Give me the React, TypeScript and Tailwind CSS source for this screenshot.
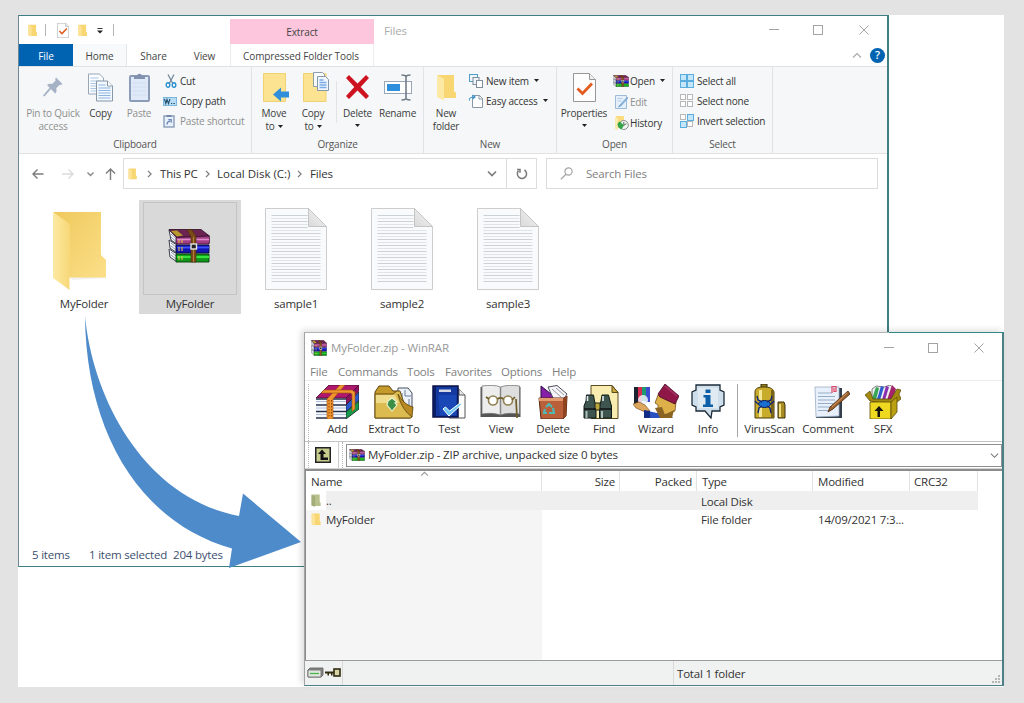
import type { ReactNode } from "react";

/* ---------- shared icons ---------- */

function FolderSmall({ className = "w-[10px] h-[14px]", green = false }: { className?: string; green?: boolean }) {
  return (
    <svg className={className} viewBox="0 0 10 14">
      <path d="M1 0.5h8v8l1 .8v3.7H1z" fill={green ? "#b9c08c" : "#f8d772"} />
      <path d="M0 .5l4 2.200v11L0 12.500z" fill={green ? "#a3ad78" : "#fde39a"} />
    </svg>
  );
}

function RarBooks({ className }: { className: string }) {
  return (
    <svg className={className} viewBox="0 0 42 34" preserveAspectRatio="none">
      <path d="M1 1l8 7v7l-6-4zM1 11l8 5v8l-7-5zM1 20l8 5v8l-7-5z" fill="#f4f6fb" stroke="#3a3f4c" strokeWidth="1" />
      <path d="M3 5l5 4.500M3 8l5 4.500M3 14l5 4M3 17l5 4M3 23l5 4M3 26l5 4" stroke="#7a8294" strokeWidth=".8" />
      <path d="M1 .5h32l8.500 6.500-33 1.500z" fill="#6d2352" stroke="#2c0d22" strokeWidth=".8" />
      <path d="M3 2l6-.5 6 5-6 1z" fill="#b79b2c" />
      <path d="M8 8.500l33-1.500c1 2 1 5 0 8H8z" fill="#a23c84" stroke="#35102c" strokeWidth=".8" />
      <path d="M9 10.500h32" stroke="#e08cc8" strokeWidth="1.600" />
      <path d="M8 16h33v8H8z" fill="#1414b0" stroke="#07073c" strokeWidth=".9" />
      <path d="M9 18.500h32" stroke="#3d50ff" strokeWidth="1.800" />
      <path d="M8 25h33v8H8z" fill="#0f9618" stroke="#063a0a" strokeWidth=".9" />
      <path d="M9 28h32" stroke="#37e23c" strokeWidth="2.200" />
      <path d="M11 11v3M14 11v3M11 18v4M14 18v4M11 27v4M14 27v4" stroke="#e2c34e" strokeWidth="1.100" />
      <path d="M19 .8h5l4 6.500V33h-5V8z" fill="#7a4a18" stroke="#4a2a0a" strokeWidth=".6" />
      <path d="M25.500 8v25" stroke="#b88442" strokeWidth=".9" />
      <rect x="23" y="15" width="5.500" height="5" fill="#222" stroke="#e5e5e5" strokeWidth="1.400" />
    </svg>
  );
}

function Chevron({ dir, className, stroke = "#7b7b7b", sw = 1.4 }: { dir: "up" | "down" | "right"; className: string; stroke?: string; sw?: number }) {
  const d = dir === "up" ? "M1 5.500l4-4 4 4" : dir === "down" ? "M1 1.500l4 4 4-4" : "M1 1l3.500 3.500L1 8";
  return (
    <svg className={className} viewBox={dir === "right" ? "0 0 5.500 9" : "0 0 10 7"} fill="none">
      <path d={d} stroke={stroke} strokeWidth={sw} />
    </svg>
  );
}

function Caret({ className = "" }: { className?: string }) {
  return (
    <svg className={"w-[5px] h-[3px] shrink-0 " + className} viewBox="0 0 5 3">
      <path d="M0 0h5L2.500 3z" fill="#222" />
    </svg>
  );
}

function WindowControls() {
  return (
    <svg className="w-[102px] h-[12px] shrink-0" viewBox="0 0 102 12" fill="none" stroke="#a3a3a3">
      <path d="M0 5.500h10" />
      <rect x="44.500" y="1.500" width="9" height="9" />
      <path d="M90.500 1.500l9 9M99.500 1.500l-9 9" />
    </svg>
  );
}

/* ---------- ribbon icons ---------- */

const PinIcon = () => (
  <svg className="w-[20px] h-[20px]" viewBox="0 0 20 20">
    <path d="M13 .5l6.500 6.500-1.800 1-1-.3-3.500 3.500c.8 2 .3 4-1 5.300L4 8c1.600-1.300 3.400-1.600 5.200-.9l3.400-3.500-.4-1.300z" fill="#a5b1c4" />
    <path d="M7.500 11.200L.7 19" stroke="#a5b1c4" strokeWidth="1.800" />
  </svg>
);

const CopyIcon = () => (
  <svg className="w-[25px] h-[29px]" viewBox="0 0 25 29">
    <path d="M.5 1h11l4 4v16H.500z" fill="#fafcff" stroke="#98a6b6" />
    <path d="M2.500 5h8M2.500 8h10M2.500 10.500h10M2.500 13h6M2.500 15.500h6M2.500 18h6" stroke="#a9c6e4" />
    <path d="M8.500 8h11l5 5v15h-16z" fill="#f3f8fe" stroke="#8797a8" />
    <path d="M19.500 8v5h5" fill="#fff" stroke="#8797a8" />
    <path d="M10.500 12h7M10.500 15h12M10.500 17.500h12M10.500 20h12M10.500 22.500h12M10.500 25h12" stroke="#8db5e3" />
  </svg>
);

const PasteIcon = () => (
  <svg className="w-[21px] h-[29px]" viewBox="0 0 21 29">
    <rect x="1" y="3" width="19" height="25" rx="1" fill="#dfe9f8" stroke="#8b9cb8" strokeWidth="2" />
    <path d="M5 6V3h3c.2-3 4.800-3 5 0h3v3z" fill="#8292ae" />
    <path d="M3.500 10h14M3.500 14h14M3.500 18h14M3.500 22h14" stroke="#d1def0" />
  </svg>
);

const CutIcon = () => (
  <svg className="w-[12px] h-[14px]" viewBox="0 0 12 14" fill="none">
    <path d="M3 .5l5 9.500M9 .5L4 10" stroke="#6f8599" strokeWidth="1.200" />
    <ellipse cx="3" cy="11" rx="1.800" ry="2.200" stroke="#2d91cf" strokeWidth="1.400" />
    <ellipse cx="9" cy="11" rx="1.800" ry="2.200" stroke="#2d91cf" strokeWidth="1.400" />
  </svg>
);

const CopyPathIcon = () => (
  <svg className="w-[14px] h-[9px]" viewBox="0 0 14 9">
    <rect x=".5" y=".5" width="13" height="8" fill="#b7dcf4" stroke="#7cb7df" />
    <path d="M1.500 2l1.300 4.500L4 2.500l1.500 4L7 2" fill="none" stroke="#21506f" strokeWidth="1.100" />
    <path d="M8 6.500h1.200M10.300 6.500h1.500" stroke="#21506f" />
  </svg>
);

const PasteShortcutIcon = () => (
  <svg className="w-[12px] h-[14px]" viewBox="0 0 12 14">
    <rect x="1" y="2" width="10" height="11" fill="#e9f1fb" stroke="#8195b5" strokeWidth="1.300" />
    <path d="M3.500 3V1h5v2z" fill="#7587a6" />
    <path d="M4 10.500c0-2 1-3 3-3.300M5.300 5.700h2.900v3" fill="none" stroke="#6886b5" strokeWidth="1.300" />
  </svg>
);

const MoveToIcon = () => (
  <svg className="w-[26px] h-[29px]" viewBox="0 0 26 29">
    <path d="M.5 .500h22v28h-22z" fill="#fbe391" stroke="#f0d273" />
    <path d="M10 21.500l8-7v4h8v6h-8v4z" fill="#2f8fdb" />
  </svg>
);

const CopyToIcon = () => (
  <svg className="w-[26px] h-[30px]" viewBox="0 0 26 30">
    <path d="M.5 1.500h22.500v28h-22.500z" fill="#fbe391" stroke="#f0d273" />
    <path d="M10.500.5h9l2 2v12h-11z" fill="#f7faff" stroke="#8f9cab" />
    <path d="M14.500 4.500h8l3 3v11h-11z" fill="#f0f6ff" stroke="#8796a9" />
    <path d="M16.500 8h4M16.500 10.500h7M16.500 13h7M16.500 15.500h7" stroke="#7aaae6" strokeWidth="1.400" />
  </svg>
);

const DeleteIcon = () => (
  <svg className="w-[25px] h-[26px]" viewBox="0 0 25 26">
    <path d="M1 4l3-3 8.500 8.500L21 1l3 3-8.300 9L24 22l-3 3-8.500-8.500L4 25l-3-3 8.300-9z" fill="#cd1320" />
  </svg>
);

const RenameIcon = () => (
  <svg className="w-[28px] h-[27px]" viewBox="0 0 28 27">
    <rect x=".5" y="7.500" width="27" height="12" fill="#fff" stroke="#98a6b5" />
    <rect x="3" y="10" width="13" height="7" fill="#2d8fdc" />
    <path d="M17.500 1c3 0 4 .5 4.500 1.500.5-1 1.500-1.500 4.500-1.500M22 2v22M17.500 26c3 0 4-.5 4.500-1.500.5 1 1.500 1.500 4.500 1.500" fill="none" stroke="#6a7681" strokeWidth="1.500" />
  </svg>
);

const NewFolderIcon = () => (
  <svg className="w-[19px] h-[27px]" viewBox="0 0 19 27">
    <path d="M1 1h16v16l2 2v5H1z" fill="#f8d672" />
    <path d="M0 1l7 4v21.500L0 23z" fill="#fde9a6" />
  </svg>
);

const NewItemIcon = () => (
  <svg className="w-[14px] h-[14px]" viewBox="0 0 14 14" fill="#eef5fb" stroke="#7f8c99">
    <rect x=".5" y=".5" width="8" height="7" stroke="#4d9dc8" />
    <rect x="4" y="3.500" width="6" height="7" />
    <rect x="7.500" y="6.500" width="6" height="7" fill="#fff" />
  </svg>
);

const EasyAccessIcon = () => (
  <svg className="w-[14px] h-[14px]" viewBox="0 0 14 14" fill="none">
    <path d="M3.500 1.500h7l3 3v9h-10z" fill="#fff" stroke="#8b98a5" />
    <path d="M10 1v4h4" stroke="#8b98a5" />
    <path d="M0 7c0-3 1.500-4 5-4M3.500 1l2.500 2-2.500 2" stroke="#3f97cf" strokeWidth="1.200" />
  </svg>
);

const PropertiesIcon = ({ className }: { className: string }) => (
  <svg className={className} viewBox="0 0 23 29">
    <path d="M.5.500h16l6 6v22H.500z" fill="#fdfdfd" stroke="#979797" />
    <path d="M16.500.500v6h6" fill="#eee" stroke="#979797" />
    <path d="M4.500 15.500l5 5L19 10.500" fill="none" stroke="#e35b1e" strokeWidth="2.800" />
  </svg>
);

const EditIcon = () => (
  <svg className="w-[13px] h-[14px]" viewBox="0 0 13 14">
    <path d="M.5.500h11v13H.500z" fill="#e5f0fa" stroke="#9bbbd6" />
    <path d="M2.500 3.500h5M2.500 6h4" stroke="#b7cfe4" />
    <path d="M12.500 2L5 10l-1.500 2 2.200-1L13 3" fill="#8db9de" stroke="#78a9d2" />
  </svg>
);

const HistoryIcon = () => (
  <svg className="w-[14px] h-[14px]" viewBox="0 0 14 14">
    <path d="M1 0h8v12H1z" fill="#fbdd80" />
    <path d="M0 1l3 1.500V14l-3-1z" fill="#fdeaad" />
    <circle cx="8.800" cy="9" r="4.500" fill="#f1f5f1" stroke="#858f89" />
    <path d="M8.800 6v3.300l2.600-1.600" stroke="#5b645e" fill="none" />
    <path d="M2.500 8.500c0 2.500 2 4.500 4 4.800L9 9.500 5 5.500C3.500 6 2.500 7 2.500 8.500z" fill="#35a54b" />
  </svg>
);

function SelectIcon({ kind }: { kind: "all" | "none" | "invert" }) {
  const cells: [number, number, boolean][] = [
    [0, 0, kind === "all"],
    [7, 0, kind !== "none"],
    [0, 7, kind !== "none"],
    [7, 7, kind === "all"],
  ];
  return (
    <svg className="w-[14px] h-[14px]" viewBox="0 0 14 14">
      {cells.map(([x, y, on]) => (
        <rect
          key={x + "-" + y}
          x={x + 0.5}
          y={y + 0.5}
          width={on ? 6 : 5}
          height={on ? 6 : 5}
          fill={on ? "#c3e6fb" : "#fff"}
          stroke={on ? "#5badde" : "#b8b8b8"}
        />
      ))}
    </svg>
  );
}

/* ---------- ribbon building blocks ---------- */

function BigButton({ icon, lines, className, muted = false, caret }: { icon: ReactNode; lines: string[]; className: string; muted?: boolean; caret?: "inline" | "below" }) {
  return (
    <div className={"flex shrink-0 flex-col items-center leading-[13px] " + (muted ? "text-[#8f8f8f] " : "text-[#3c3c3c] ") + className}>
      <div className="flex h-[36px] items-center justify-center pb-[4px]">{icon}</div>
      {lines.map((l, i) => (
        <div key={l} className="flex items-center gap-[3px] whitespace-nowrap">
          {l}
          {caret === "inline" && i === lines.length - 1 && <Caret />}
        </div>
      ))}
      {caret === "below" && <Caret className="mt-[4px]" />}
    </div>
  );
}

function SmallButton({ icon, label, muted = false, caret = false }: { icon: ReactNode; label: string; muted?: boolean; caret?: boolean }) {
  return (
    <div className="flex h-[20px] items-center">
      <div className="flex w-[17px] items-center">{icon}</div>
      <span className={"whitespace-nowrap " + (muted ? "text-[#8f8f8f]" : "text-[#333]")}>{label}</span>
      {caret && <Caret className="ml-[5px] mb-[2px]" />}
    </div>
  );
}

function Group({ label, className, children }: { label: string; className: string; children: ReactNode }) {
  return (
    <div className={"flex shrink-0 flex-col border-r border-[#e2e3e4] " + className}>
      <div className="flex h-[70px] pt-[4px]">{children}</div>
      <div className="pt-px text-center leading-[17px] text-[#555]">{label}</div>
    </div>
  );
}

function Ribbon() {
  return (
    <div className="flex h-[88px] border-y border-[#dfe1e3] bg-[#f5f7f8] text-[10px] tracking-[-0.2px]">
      <Group label="Clipboard" className="w-[233px]">
        <BigButton className="ml-[4px] w-[60px]" muted icon={<PinIcon />} lines={["Pin to Quick", "access"]} />
        <BigButton className="w-[35px]" icon={<CopyIcon />} lines={["Copy"]} />
        <BigButton className="w-[42px]" muted icon={<PasteIcon />} lines={["Paste"]} />
        <div className="ml-[3px]">
          <SmallButton icon={<span className="pl-[2px]"><CutIcon /></span>} label="Cut" />
          <SmallButton icon={<CopyPathIcon />} label="Copy path" />
          <SmallButton icon={<PasteShortcutIcon />} label="Paste shortcut" muted />
        </div>
      </Group>
      <Group label="Organize" className="w-[172px]">
        <BigButton className="ml-[2px] w-[40px]" icon={<span className="pl-[3px]"><MoveToIcon /></span>} lines={["Move", "to"]} caret="inline" />
        <BigButton className="w-[38px]" icon={<span className="pl-[5px]"><CopyToIcon /></span>} lines={["Copy", "to"]} caret="inline" />
        <div className="ml-[4px] mt-[10px] h-[42px] w-px bg-[#e2e3e4]" />
        <BigButton className="w-[41px]" icon={<DeleteIcon />} lines={["Delete"]} caret="below" />
        <BigButton className="w-[39px]" icon={<RenameIcon />} lines={["Rename"]} />
      </Group>
      <Group label="New" className="w-[133px]">
        <BigButton className="w-[44px]" icon={<NewFolderIcon />} lines={["New", "folder"]} />
        <div className="ml-px">
          <SmallButton icon={<NewItemIcon />} label="New item" caret />
          <SmallButton icon={<EasyAccessIcon />} label="Easy access" caret />
        </div>
      </Group>
      <Group label="Open" className="w-[116px]">
        <BigButton className="w-[54px]" icon={<PropertiesIcon className="h-[29px] w-[23px]" />} lines={["Properties"]} caret="below" />
        <div className="ml-[2px] flex flex-col gap-px">
          <SmallButton icon={<RarBooks className="h-[12px] w-[16px]" />} label="Open" caret />
          <SmallButton icon={<span className="pl-[2px]"><EditIcon /></span>} label="Edit" muted />
          <SmallButton icon={<span className="pl-[2px]"><HistoryIcon /></span>} label="History" />
        </div>
      </Group>
      <Group label="Select" className="w-[100px]">
        <div className="ml-[7px]">
          <SmallButton icon={<SelectIcon kind="all" />} label="Select all" />
          <SmallButton icon={<SelectIcon kind="none" />} label="Select none" />
          <SmallButton icon={<SelectIcon kind="invert" />} label="Invert selection" />
        </div>
      </Group>
    </div>
  );
}

/* ---------- explorer window ---------- */

function TitleAndTabs() {
  return (
    <div className="h-[50px] text-[10px] tracking-[-0.1px] text-[#444]">
      <div className="flex h-[28px]">
        <div className="flex w-[211px] items-center pl-[9px]">
          <FolderSmall className="h-[13px] w-[9px]" />
          <div className="ml-[8px] h-[12px] w-px bg-[#b5b5b5]" />
          <PropertiesIcon className="ml-[11px] h-[15px] w-[12px]" />
          <FolderSmall className="ml-[9px] h-[13px] w-[9px]" />
          <svg className="ml-[9px] mt-[2px] h-[6px] w-[8px]" viewBox="0 0 8 6">
            <path d="M1.500.500h5" stroke="#333" />
            <path d="M1 2.500h6L4 5.500z" fill="#222" />
          </svg>
          <div className="ml-[9px] h-[12px] w-px bg-[#b5b5b5]" />
        </div>
        <div className="mt-[3px] flex w-[144px] items-center justify-center bg-[#fdc6dd] pt-[2px]">Extract</div>
        <div className="flex flex-1 items-center pl-[10px] pt-px text-[11.5px] tracking-[-0.2px] text-[#aaa]">Files</div>
        <div className="flex items-center pr-[16px]">
          <WindowControls />
        </div>
      </div>
      <div className="flex h-[22px] items-stretch">
        <div className="flex w-[54px] items-center justify-center bg-[#0063b1] pt-[2px] text-white">File</div>
        <div className="flex w-[54px] items-center justify-center border-r border-[#e4e6e8] bg-[#f7f9fa] pt-[2px]">Home</div>
        <div className="flex w-[53px] items-center justify-center pt-[2px]">Share</div>
        <div className="flex w-[49px] items-center justify-center pt-[2px]">View</div>
        <div className="ml-px flex w-[144px] items-center justify-center border-x border-[#ececec] pr-[2px] pt-[2px]">Compressed Folder Tools</div>
        <div className="flex flex-1 items-center justify-end gap-[8px] pr-[2px]">
          <Chevron dir="up" className="h-[7px] w-[10px]" stroke="#aaa" sw={1.2} />
          <div className="flex h-[15px] w-[15px] items-center justify-center rounded-full bg-[#0063b1] text-[11px] font-semibold text-white">?</div>
        </div>
      </div>
    </div>
  );
}

function AddressRow() {
  return (
    <div className="mt-[4px] flex h-[31px] items-stretch pl-[13px] text-[11.5px] tracking-[-0.2px] text-[#333]">
      <div className="flex w-[91px] items-center">
        <svg className="h-[14px] w-[84px]" viewBox="0 0 84 14" fill="none" strokeWidth="1.400">
          <path d="M11.500 7H1M5.500 2.500L1 7l4.500 4.500" stroke="#7c7c7c" />
          <path d="M30 7h11M36.500 2.500L41 7l-4.500 4.500" stroke="#dadada" />
          <path d="M55.500 5.500l3 3 3-3" stroke="#888" />
          <path d="M78.500 13V2M74 6.500L78.500 2l4.500 4.500" stroke="#7c7c7c" />
        </svg>
      </div>
      <div className="flex w-[384px] items-center border border-[#dcdcdc] pl-[4px]">
        <FolderSmall className="h-[12px] w-[9px]" />
        <Chevron dir="right" className="ml-[10px] h-[8px] w-[5px]" />
        <span className="ml-[8px] w-[37px] whitespace-nowrap pt-px">This PC</span>
        <Chevron dir="right" className="ml-[8px] h-[8px] w-[5px]" />
        <span className="ml-[7px] w-[74px] whitespace-nowrap pt-px tracking-[0px]">Local Disk (C:)</span>
        <Chevron dir="right" className="ml-[6px] h-[8px] w-[5px]" />
        <span className="ml-[8px] pt-px">Files</span>
        <Chevron dir="down" className="ml-auto mr-[9px] h-[7px] w-[10px]" sw={1.6} />
      </div>
      <div className="-ml-px flex w-[31px] items-center justify-center border border-[#dcdcdc]">
        <svg className="h-[12px] w-[12px]" viewBox="0 0 12 12" fill="none" stroke="#7a7a7a" strokeWidth="1.500">
          <path d="M8.500 2a4.600 4.600 0 1 1-6 .8M1 1.500h3v3.200" />
        </svg>
      </div>
      <div className="ml-[9px] flex w-[332px] items-center border border-[#dcdcdc] pl-[13px] text-[#808080]">
        <svg className="h-[13px] w-[13px]" viewBox="0 0 13 13" fill="none" stroke="#a5a5a5" strokeWidth="1.200">
          <circle cx="8.500" cy="4.500" r="3.600" />
          <path d="M6 7.200L.8 12.200" />
        </svg>
        <span className="ml-[13px] pt-px">Search Files</span>
      </div>
    </div>
  );
}

const BigFolder = () => (
  <svg className="h-[80px] w-[54px]" viewBox="0 0 54 80">
    <defs>
      <linearGradient id="fb" x1="0" y1="0" x2="1" y2="1">
        <stop offset="0" stopColor="#efc95d" />
        <stop offset="1" stopColor="#fbdf88" />
      </linearGradient>
      <linearGradient id="ff" x1="0" y1="0" x2="1" y2="0">
        <stop offset="0" stopColor="#fde9a2" />
        <stop offset="1" stopColor="#f7d878" />
      </linearGradient>
    </defs>
    <path d="M17 66h35l2 1-35 2z" fill="#f0f0f0" />
    <path d="M.5 1h47.500v43l5 5v17.500H14z" fill="url(#fb)" />
    <path d="M0 1l14.500 10.500c2 1.500 2.500 2.500 2.500 4.500v42l-.5 3v18L0 67z" fill="url(#ff)" />
  </svg>
);

const TextFile = () => (
  <svg className="h-[82px] w-[62px]" viewBox="0 0 62 82">
    <defs>
      <linearGradient id="fold" x1="0" y1="1" x2="1" y2="0">
        <stop offset="0" stopColor="#d9d9d9" />
        <stop offset="1" stopColor="#f6f6f6" />
      </linearGradient>
    </defs>
    <path d="M.5.500h43l18 18v63H.500z" fill="#f8fafb" stroke="#cdcdcd" />
    {Array.from({ length: 23 }, (_, i) => (
      <path key={i} d={`M6.500 ${7.5 + i * 3}h${i < 5 ? 36 : 49}`} stroke={i % 2 ? "#dfe4e6" : "#cbd1d5"} />
    ))}
    <path d="M43.500.500v18h18z" fill="url(#fold)" stroke="#c4c4c4" />
  </svg>
);

function FileItem({ name, children, selected = false }: { name: string; children: ReactNode; selected?: boolean }) {
  return (
    <div className={"flex h-[114px] w-[102px] shrink-0 flex-col items-center pt-[2px] " + (selected ? "bg-[#d9d9d9]" : "")}>
      <div className={"flex h-[93px] w-[94px] items-center justify-center border " + (selected ? "border-[#c4c4c4]" : "border-transparent")}>{children}</div>
      <div className="leading-[17px]">{name}</div>
    </div>
  );
}

function Explorer() {
  return (
    <div className="absolute left-[18px] top-[15px] flex h-[552px] w-[871px] flex-col border border-r-2 border-[#3e7f83] border-l-[#6d8796] bg-white">
      <TitleAndTabs />
      <Ribbon />
      <AddressRow />
      <div className="mt-[11px] flex flex-1 gap-[4px] pl-[14px] text-[11.5px] tracking-[-0.2px] text-[#333]">
        <FileItem name="MyFolder"><div className="pr-[9px] pt-[5px]"><BigFolder /></div></FileItem>
        <FileItem name="MyFolder" selected><div className="pb-[6px] pr-[2px]"><RarBooks className="h-[34px] w-[42px]" /></div></FileItem>
        <FileItem name="sample1"><TextFile /></FileItem>
        <FileItem name="sample2"><TextFile /></FileItem>
        <FileItem name="sample3"><div><TextFile /></div></FileItem>
      </div>
      <div className="flex h-[23px] items-center pl-[13px] pt-px text-[11.5px] tracking-[-0.2px] text-[#3d4f6e]">
        <span className="w-[57px]">5 items</span>
        <span className="w-[84px] whitespace-nowrap">1 item selected</span>
        <span>204 bytes</span>
      </div>
    </div>
  );
}

/* ---------- WinRAR toolbar icons ---------- */

const AddIcon = () => (
  <svg className="h-[34px] w-[43px]" viewBox="0 0 43 34">
    <path d="M0 13L13 0h30L30 13z" fill="#b01870" stroke="#3b0a2a" strokeWidth=".8" />
    <path d="M30 13L43 0v6L30 20z" fill="#8c1260" stroke="#3b0a2a" strokeWidth=".6" />
    <path d="M30 20L43 7v8L30 27z" fill="#2b58d0" stroke="#122" strokeWidth=".8" />
    <path d="M30 27l13-11v8L30 34z" fill="#169a4d" stroke="#122" strokeWidth=".8" />
    <path d="M0 13.500h30V34H0z" fill="#f5f8fd" />
    <path d="M0 14h30M0 20h30M0 26.500h30M0 33h30" stroke="#28304c" strokeWidth="1.600" />
    <path d="M0 16.500h30M0 23h30M0 29.500h30" stroke="#9cb0d0" strokeWidth=".8" />
    <path d="M11 14L24 0h5L17 14v20h-6z" fill="#f0962e" stroke="#9c4e0c" strokeWidth=".6" />
    <path d="M8 5h28l3 2v17l-3 2.500V9l-2-1H5z" fill="#f0962e" stroke="#9c4e0c" strokeWidth=".6" />
    <path d="M13 15v18M15.500 15v18" stroke="#8f4708" strokeDasharray="1.500 1.500" />
  </svg>
);

const ExtractIcon = () => (
  <svg className="h-[34px] w-[40px]" viewBox="0 0 40 34">
    <path d="M1 7l4-6h10l4 5h17v27H1z" fill="#c49a2b" stroke="#5b430e" />
    <path d="M24 3h10l4 5v18H24z" fill="#eef2fb" stroke="#454c5c" />
    <path d="M31 5v6h6M28 8v10M35 14v8" stroke="#6b7b9b" fill="none" />
    <path d="M1 9h18l4-3h3c3 10 6 17 12 25l-1 2H1z" fill="#dcbb50" stroke="#6b5013" />
    <path d="M2 10h19l4 8H2z" fill="#f5e7a0" opacity=".75" />
    <path d="M24 9c2 9 6 17 14 23L39 22C32 20 27 15 24 9z" fill="#b98a22" stroke="#5b430e" strokeWidth=".8" />
    <path d="M18 13l5 4-2 1 2 2-5 6-5-6 1-4z" fill="#3c8f46" stroke="#eef3cf" strokeWidth="1.100" />
  </svg>
);

const TestIcon = () => (
  <svg className="h-[34px] w-[34px]" viewBox="0 0 34 34">
    <path d="M17 4h10l6 6v23H17z" fill="#fff" stroke="#555" />
    <path d="M27 4v6h6" fill="#e8e8e8" stroke="#555" />
    <path d="M1 1h25v31H1z" fill="#14399f" stroke="#070f45" strokeWidth="1.500" />
    <path d="M2 2h2v29H2z" fill="#0a1e68" />
    <path d="M6 10h18v20H8z" fill="#1e55c9" opacity=".55" />
    <rect x="7" y="4.500" width="12" height="2.500" fill="#d5dae6" />
    <path d="M11 24l6 7 13-12-2-1-10.500 8-4-4z" fill="#72c8f5" stroke="#fff" strokeWidth="1" />
  </svg>
);

const ViewIcon = () => (
  <svg className="h-[34px] w-[42px]" viewBox="0 0 42 34">
    <path d="M.5 2h40v30H.500z" fill="#555" />
    <path d="M2 1c7-1 14-1 18.500 1v28C15 28 8 28 2 29z" fill="#ededed" stroke="#777" strokeWidth=".8" />
    <path d="M39.500 1c-7-1-14-1-19 1v28c5-2 12-2 19-1z" fill="#dedede" stroke="#777" strokeWidth=".8" />
    <path d="M20.500 2v28" stroke="#888" strokeWidth="1.500" />
    <circle cx="13" cy="15.500" r="4.500" fill="#fff" stroke="#908052" strokeWidth="1.600" />
    <circle cx="28" cy="15.500" r="4.500" fill="#fff" stroke="#908052" strokeWidth="1.600" />
    <path d="M6 12l3 2M17.500 14c2-1.500 4-1.500 6 0M32 15l3-3M36 14l1 19" stroke="#6f5e28" strokeWidth="1.700" fill="none" />
  </svg>
);

const TrashIcon = () => (
  <svg className="h-[34px] w-[31px]" viewBox="0 0 31 34">
    <path d="M3 14L3 1l15 12z" fill="#8620a8" stroke="#2c0c45" />
    <path d="M10 2l9-1.500L29 9l-4 6h-9z" fill="#f5f5fa" stroke="#4c4c5b" />
    <path d="M14 4l9 8M18 3l8 7" stroke="#999" />
    <path d="M1 13h26l2-2-1 20-3 3H3z" fill="#b9603a" stroke="#572612" />
    <path d="M1 13h24v3H1z" fill="#e29a6e" />
    <path d="M25 14l4-3-1 20-3 3z" fill="#92431f" />
    <path d="M8 22l3-3 3 3M15 23l1 5h-5M9 28H6l1-4" fill="none" stroke="#4fb9b6" strokeWidth="2.200" />
  </svg>
);

const FindIcon = () => (
  <svg className="h-[34px] w-[37px]" viewBox="0 0 37 34">
    <path d="M8 .5h21l6 7v26H8z" fill="#f8ecb0" stroke="#5b4a1c" />
    <path d="M29 .500v7h6z" fill="#c9a63c" stroke="#5b4a1c" />
    <path d="M3.500 10h7l1 6 1.500 5v12H1V21l2-5zM19 10h6.500l1.500 6 1.500 5v12h-12V21l1.500-5z" fill="#3d554e" stroke="#0e1a16" />
    <path d="M12 18h5v7h-5z" fill="#b9a638" stroke="#222" />
    <path d="M4.500 11v5M20 11v5" stroke="#e5edf0" strokeWidth="1.600" />
    <path d="M1 24h12M16.500 24h12" stroke="#111" strokeWidth="1.500" />
    <path d="M3.500 26v7M19 26v7" stroke="#aebdb8" strokeWidth="2" />
  </svg>
);

const WizardIcon = () => (
  <svg className="h-[35px] w-[46px]" viewBox="0 0 46 35">
    <path d="M1 3h5v17H1z" fill="#1b2230" />
    <path d="M5 3h4v16H5z" fill="#d52c50" />
    <path d="M9 3h4v14H9z" fill="#1d9b6e" />
    <path d="M13 3h4v15h-4z" fill="#3e4bd0" />
    <circle cx="10" cy="16" r="5" fill="#eaf2fb" opacity=".85" />
    <path d="M0 20l6-2 6 3 5 6-5 1-9-4z" fill="#dda75d" stroke="#754718" strokeWidth=".6" />
    <path d="M11 34l4-7 9 2 12 1 4 4z" fill="#2850c0" />
    <path d="M11 26l6 1v7h-6z" fill="#122c86" />
    <path d="M25 11l-3 8 3 2v6l6 4 11-4 1-9z" fill="#deb049" stroke="#67440d" strokeWidth=".7" />
    <path d="M22 24l7-1 3 8 9-5-2 8H27z" fill="#8a6322" />
    <path d="M25 10L32 0l14 12-4 8-15-7z" fill="#8e1748" stroke="#43071f" strokeWidth=".8" />
    <path d="M32 2l12 10" stroke="#a83264" strokeWidth="1.500" />
  </svg>
);

const InfoIcon = () => (
  <svg className="h-[35px] w-[34px]" viewBox="0 0 34 35">
    <path d="M5 1h24v5l4 2v13l-4 2v4h-8l-1 7-6-7H5v-4l-4-2V8l4-2z" fill="#cfdeeb" stroke="#1d2b38" strokeWidth="1.300" />
    <path d="M7 4h20v20H7z" fill="#e6eff7" opacity=".7" />
    <rect x="14.500" y="5.500" width="5" height="3.500" fill="#0d5fa8" />
    <path d="M12.500 11h7v9.500H22v2.500H12v-2.500h2.500v-7h-2z" fill="#0d5fa8" />
  </svg>
);

const VirusIcon = () => (
  <svg className="h-[35px] w-[32px]" viewBox="0 0 32 35">
    <path d="M7 0h6v4H7z" fill="#8f7922" stroke="#352c09" />
    <path d="M1 8c0-4 4-5 9-5s9 1 10 5v26H1z" fill="#c9ab2b" stroke="#4a3c0a" />
    <path d="M5 6h3v27H5z" fill="#f4e79a" />
    <path d="M17 6h3v28h-3z" fill="#7a6415" />
    <path d="M24 18h6l1 3v13h-7z" fill="#a98c21" stroke="#3b300a" />
    <path d="M26 20v13" stroke="#eedc80" strokeWidth="2" />
    <ellipse cx="10.500" cy="20" rx="6" ry="3.500" fill="#1b6fd0" stroke="#0b1a54" />
    <path d="M3 12l1 4 4 2M18 12l-1 4-4 2M1 17l3 3M20 17l-3 3M4 29l1-5 3-2M17 29l-1-5-3-2" stroke="#10277a" strokeWidth="1.400" fill="none" />
  </svg>
);

const CommentIcon = () => (
  <svg className="h-[34px] w-[36px]" viewBox="0 0 36 34">
    <path d="M3 3h25v30H2z" fill="#333f4d" />
    <path d="M1 2h24v29L2 32z" fill="#e8f1fb" stroke="#9cadc0" strokeWidth=".8" />
    <path d="M4 8h14M4 11.500h17M4 15h17M4 18.500h15M4 22h13M4 25.500h10" stroke="#95acc8" />
    <path d="M18 8V1.500h4V6.500h-2V3" fill="none" stroke="#e14562" strokeWidth="1.200" />
    <path d="M34 6l2 3-17 15-5 3 2-5z" fill="#9c6330" stroke="#482509" strokeWidth=".8" />
    <path d="M18 22L33 8" stroke="#d49b5e" />
  </svg>
);

const SfxIcon = () => (
  <svg className="h-[34px] w-[36px]" viewBox="0 0 36 34">
    <path d="M7 4l4-3 8 1 6-2 5 4-3 12H7z" fill="#eee" stroke="#333" strokeWidth=".6" />
    <path d="M7 14L11 2l3 1-3 12z" fill="#36a558" />
    <path d="M12 14l4-13 3 1-4 13z" fill="#2c5ed0" />
    <path d="M17 15l4-14 3 1-4 13z" fill="#8a2db0" />
    <path d="M22 15L27 0l4 4-4 11z" fill="#a3246a" />
    <path d="M5 16L0 10l5-4 3 8h18l6-10 4 1-2 4 2 5-8 6z" fill="#a38b12" stroke="#514306" strokeWidth=".7" />
    <path d="M5 17h21v17H5z" fill="#eed820" stroke="#5a4d07" strokeWidth=".8" />
    <path d="M26 17l6-5v15l-6 7z" fill="#bba012" stroke="#5a4d07" strokeWidth=".8" />
    <path d="M12.500 32v-6H9.500l4.500-5 4.500 5H15v6z" fill="#15120a" />
  </svg>
);

/* ---------- WinRAR window ---------- */

function Tool({ icon, label, className }: { icon: ReactNode; label: string; className: string }) {
  return (
    <div className={"flex shrink-0 flex-col items-center whitespace-nowrap " + className}>
      <div className="flex h-[36px] items-center pb-px">{icon}</div>
      <div className="leading-[17px]">{label}</div>
    </div>
  );
}

const Grip = () => <div className="w-0 self-stretch border-l border-dotted border-[#b3b3b3]" />;

function FileList() {
  const cell = "flex items-center border-r border-[#e2e2e2] pt-[2px]";
  return (
    <div className="flex h-[191px] flex-col border-l border-t-2 border-[#8c8c8c] bg-white">
      <div className="relative flex h-[20px] shrink-0">
        <div className={cell + " w-[236px] pl-[5px]"}>Name</div>
        <div className={cell + " w-[78px] justify-end pr-[4px]"}>Size</div>
        <div className={cell + " w-[77px] justify-end pr-[4px]"}>Packed</div>
        <div className={cell + " w-[116px] pl-[5px]"}>Type</div>
        <div className={cell + " w-[97px] pl-[5px]"}>Modified</div>
        <div className={cell + " w-[68px] pl-[4px]"}>CRC32</div>
        <Chevron dir="up" className="absolute left-[114px] top-0 h-[6px] w-[9px]" stroke="#999" sw={1.2} />
      </div>
      <div className="flex flex-1">
        <div className="w-[236px] bg-[#f5f5f5]">
          <div className="flex h-[19px]">
            <div className="flex w-[20px] items-center bg-white pl-[5px]"><FolderSmall green className="h-[13px] w-[10px]" /></div>
            <div className="flex-1 bg-[#efefef] pt-px">..</div>
          </div>
          <div className="flex h-[19px] items-center pl-[5px]">
            <FolderSmall className="h-[13px] w-[10px]" />
            <span className="ml-[5px] pt-px">MyFolder</span>
          </div>
        </div>
        <div className="w-[436px]">
          <div className="flex h-[19px] items-center bg-[#efefef] pl-[159px] pt-[2px]">Local Disk</div>
          <div className="flex h-[19px] items-center pl-[159px] pt-px">
            <span className="w-[117px]">File folder</span>
            <span className="whitespace-nowrap">14/09/2021 7:3...</span>
          </div>
        </div>
      </div>
    </div>
  );
}

function WinRar() {
  return (
    <div className="absolute left-[304px] top-[332px] flex h-[354px] w-[700px] flex-col border border-r-2 border-[#4c8087] border-l-[#a3a3a3] border-t-[#b3b3b3] bg-white text-[11.5px] tracking-[-0.2px] text-[#333] shadow-[-3px_-2px_6px_rgba(0,0,0,0.13)]">
      <div className="absolute -right-[2px] -top-px h-px w-[115px] bg-[#2f8883]" />
      <div className="flex h-[29px] shrink-0 items-center pl-[6px] pr-[16px] text-[#999]">
        <RarBooks className="h-[16px] w-[16px]" />
        <span className="ml-[4px] flex-1 pt-px tracking-[-0.1px]">MyFolder.zip - WinRAR</span>
        <WindowControls />
      </div>
      <div className="flex h-[19px] shrink-0 items-center border-b border-[#ececec] pl-[5px] pt-[2px] text-[#808080]">
        <span className="w-[28px]">File</span>
        <span className="w-[69px]">Commands</span>
        <span className="w-[38px]">Tools</span>
        <span className="w-[56px]">Favorites</span>
        <span className="w-[51px]">Options</span>
        <span>Help</span>
      </div>
      <div className="flex h-[61px] shrink-0 border-b border-[#c4c4c4] pl-[3px] pt-[3px]">
        <Grip />
        <Tool className="w-[57px]" icon={<AddIcon />} label="Add" />
        <Tool className="w-[56px]" icon={<ExtractIcon />} label="Extract To" />
        <Tool className="w-[54px]" icon={<TestIcon />} label="Test" />
        <Tool className="w-[50px]" icon={<ViewIcon />} label="View" />
        <Tool className="w-[54px]" icon={<TrashIcon />} label="Delete" />
        <Tool className="w-[48px]" icon={<span className="pr-[6px]"><FindIcon /></span>} label="Find" />
        <Tool className="w-[56px]" icon={<WizardIcon />} label="Wizard" />
        <Tool className="w-[48px]" icon={<InfoIcon />} label="Info" />
        <div className="mb-[4px] ml-[5px] w-px bg-[#a5a5a5]" />
        <Tool className="w-[63px]" icon={<VirusIcon />} label="VirusScan" />
        <Tool className="w-[54px]" icon={<span className="pl-[8px]"><CommentIcon /></span>} label="Comment" />
        <Tool className="w-[56px]" icon={<SfxIcon />} label="SFX" />
      </div>
      <div className="flex h-[26px] shrink-0 items-center pl-[3px]">
        <Grip />
        <svg className="ml-[6px] h-[16px] w-[16px]" viewBox="0 0 16 16">
          <rect x=".75" y=".75" width="14.500" height="14.500" fill="#c6cc8c" stroke="#222" strokeWidth="1.500" />
          <path d="M3 7l4-4.500L11 7H8.500v3.500H13V13H5.500V7z" fill="#111" />
        </svg>
        <div className="ml-[7px] flex gap-[3px] self-stretch">
          <div className="w-px bg-[#ccc]" />
          <Grip />
        </div>
        <div className="ml-[3px] flex h-[23px] flex-1 items-center border border-[#8f8f8f] pl-[2px] pr-[2px]">
          <RarBooks className="h-[12px] w-[16px]" />
          <span className="ml-[3px] flex-1">MyFolder.zip - ZIP archive, unpacked size 0 bytes</span>
          <Chevron dir="down" className="h-[7px] w-[9px]" stroke="#777" sw={1.2} />
        </div>
      </div>
      <div className="h-px shrink-0 bg-[#d5d5d5]" />
      <FileList />
      <div className="flex flex-1 border-t border-[#9b9b9b] bg-[#f0f1f1]">
        <div className="flex w-[38px] items-center border-r border-[#dadada] pl-[2px]">
          <svg className="h-[12px] w-[34px]" viewBox="0 0 34 12">
            <path d="M1 3l2-2h13v7l-2 2H1z" fill="#8d8d8d" stroke="#555" strokeWidth=".8" />
            <path d="M1 3h13v7H1z" fill="#e2e4e0" stroke="#666" strokeWidth=".8" />
            <path d="M3 6.500h9" stroke="#45b84a" strokeWidth="1.300" />
            <path d="M18 4.500h9v2h-1.500v2H24v-2h-2v2h-1.500v-2H18z" fill="#2e2a10" />
            <rect x="27" y="2" width="6" height="7" fill="#d9d4a6" stroke="#2e2a10" strokeWidth="1.600" />
          </svg>
        </div>
        <div className="w-[331px] border-r border-[#dadada]" />
        <div className="flex flex-1 items-center pl-[3px] pt-[2px]">Total 1 folder</div>
        <svg className="mr-px mb-px h-[9px] w-[9px] self-end" viewBox="0 0 9 9" fill="#b5b5b5">
          <path d="M6 0h2v2H6zM3 3h2v2H3zM6 3h2v2H6zM0 6h2v2H0zM3 6h2v2H3zM6 6h2v2H6z" />
        </svg>
      </div>
    </div>
  );
}

export default function App() {
  return (
    <div className="h-[703px] w-[1024px] overflow-hidden bg-[#e3e3e3] pl-[18px] pt-[15px] font-['Open_Sans','Noto_Sans',sans-serif]">
      <div className="h-[672px] w-[986px] bg-white" />
      <Explorer />
      <WinRar />
      <svg className="absolute left-[80px] top-[310px] h-[262px] w-[224px]" viewBox="80 310 224 262">
        <path d="M85 316C93 400 145 498 239 516L243 493.500 301 542 229 568 232 548.500C138 522 86 430 85 316z" fill="#4e8bca" />
      </svg>
    </div>
  );
}
